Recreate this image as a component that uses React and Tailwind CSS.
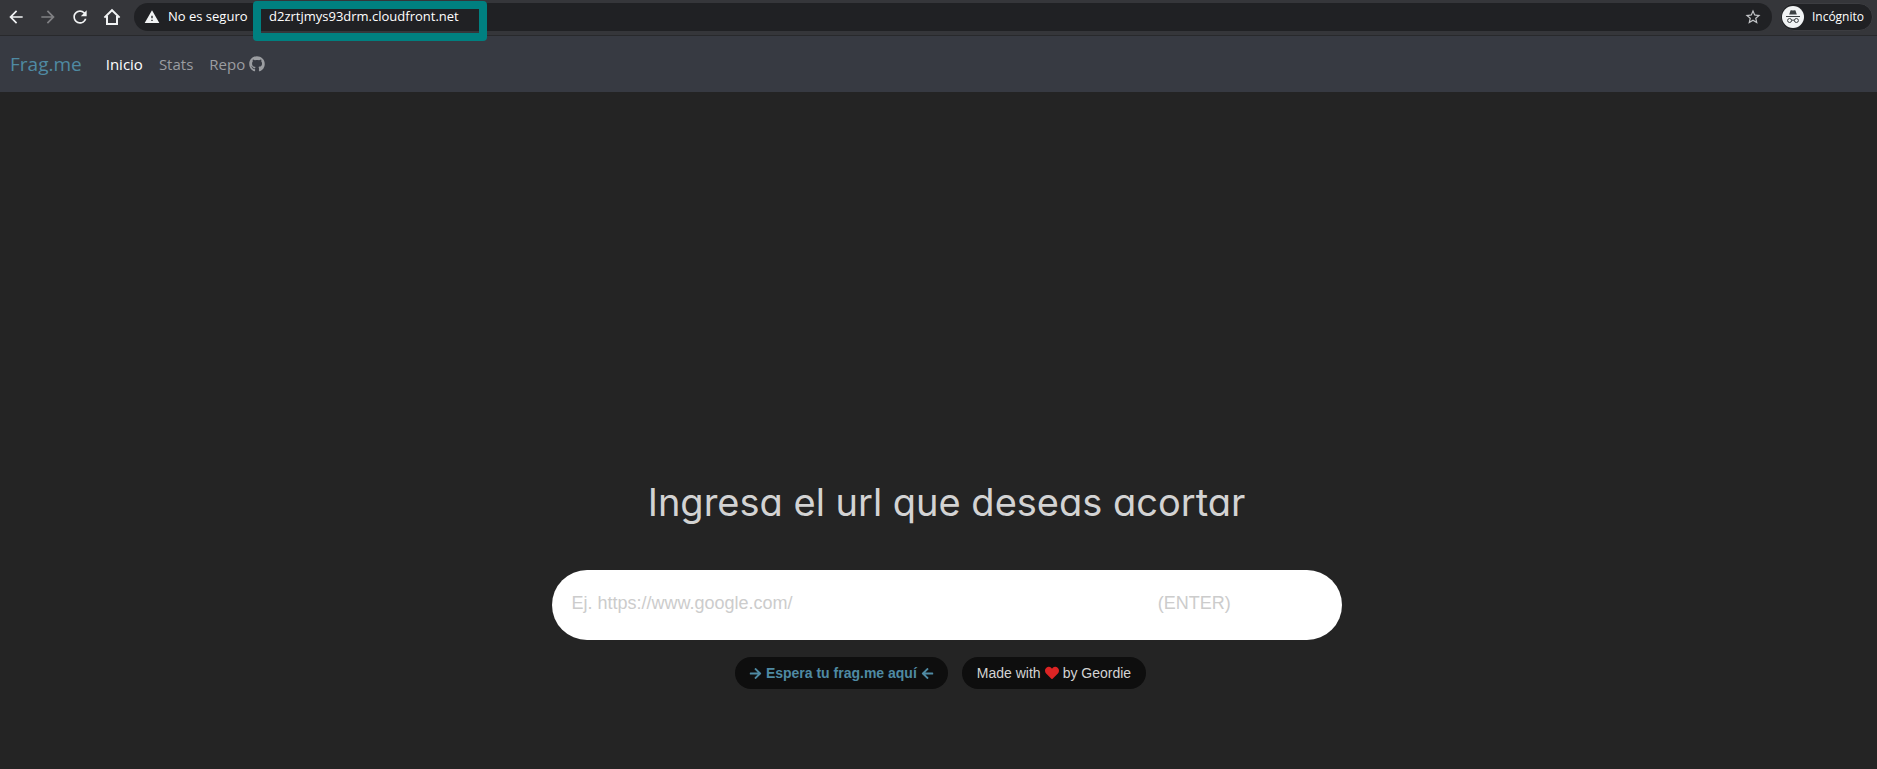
import React from "react";
import { MdArrowBack, MdArrowForward, MdRefresh, MdWarning, MdStarBorder } from "react-icons/md";
import { FaGithub, FaArrowRight, FaArrowLeft, FaHeart } from "react-icons/fa";

const placeholder = "Ej. https://www.google.com/" + "\u00a0".repeat(73) + "(ENTER)";

function ToolButton({ label, children }) {
  return (
    <button type="button" aria-label={label} className="flex size-8 items-center justify-center">
      {children}
    </button>
  );
}

function House() {
  return (
    <svg viewBox="0 0 18 18" className="size-[18px]" fill="none" stroke="currentColor" strokeWidth="2" aria-hidden="true">
      <path d="M1.4 9.6 9 2.2l7.6 7.4M4 8v8h10V8" />
    </svg>
  );
}

function Incognito() {
  return (
    <svg viewBox="0 0 22 22" className="size-[22px]" aria-hidden="true">
      <circle cx="11" cy="11" r="11" fill="#f1f3f4" />
      <path d="M7.2 8.6 8.5 4.6q.2-.6.8-.4l1.7.4 1.7-.4q.6-.2.8.4l1.3 4z" fill="#3c4043" />
      <path d="M4 10.5h14" stroke="#3c4043" strokeWidth="1" />
      <circle cx="7.6" cy="14.5" r="2" fill="none" stroke="#3c4043" strokeWidth="1" />
      <circle cx="14.4" cy="14.5" r="2" fill="none" stroke="#3c4043" strokeWidth="1" />
      <path d="M9.6 14.4q1.4-.7 2.8 0" fill="none" stroke="#3c4043" strokeWidth="1" />
    </svg>
  );
}

function BrowserBar() {
  return (
    <header className="flex h-9 items-center border-b border-[#28292c] bg-[#35363a] pr-1 pb-1 pt-[3px] font-['Open_Sans','Noto_Sans',sans-serif] text-white">
      <div className="flex text-[#f1f3f4]">
        <ToolButton label="Atrás"><MdArrowBack className="size-5" /></ToolButton>
        <ToolButton label="Adelante"><MdArrowForward className="size-5 text-[#808184]" /></ToolButton>
        <ToolButton label="Recargar"><MdRefresh className="size-5" /></ToolButton>
        <ToolButton label="Inicio"><House /></ToolButton>
      </div>
      <div className="ml-1.5 flex h-7 flex-1 items-center rounded-full bg-[#202124] px-2.5 text-[13px]">
        <MdWarning className="mr-2 size-4 text-[#f1f3f4]" />
        <span className="w-[85px] whitespace-nowrap">No es seguro</span>
        <div className="relative flex-1">
          <input
            aria-label="Dirección"
            defaultValue="d2zrtjmys93drm.cloudfront.net"
            className="block w-full bg-transparent pl-4 outline-none"
          />
          <div className="pointer-events-none absolute -top-1.5 left-0 h-10 w-[234px] rounded border-8 border-[#008080]" />
        </div>
        <button type="button" aria-label="Favoritos"><MdStarBorder className="size-[18px] text-[#c4c6c9]" /></button>
      </div>
      <button type="button" className="ml-2 flex h-7 items-center gap-2 rounded-full border border-[#3c3d41] bg-[#202124] pl-px pr-2 text-xs">
        <Incognito />
        Incógnito
      </button>
    </header>
  );
}

function NavBar() {
  return (
    <nav className="flex h-14 items-center bg-[#373a42] px-2.5 font-['Open_Sans','Noto_Sans',sans-serif] text-[15px] text-[#9b9da1]">
      <a href="#" className="mr-6 text-[19px] text-[#4f8aa3]">Frag.me</a>
      <div className="flex gap-4">
        <a href="#inicio" className="text-white">Inicio</a>
        <a href="#stats">Stats</a>
        <a href="#repo" className="flex items-center gap-1">Repo <FaGithub className="size-4" /></a>
      </div>
    </nav>
  );
}

export default function App() {
  return (
    <div className="flex min-h-screen flex-col bg-[#242424]">
      <BrowserBar />
      <NavBar />
      <main className="flex flex-1 flex-col items-center justify-end pb-20 pl-4 font-['Liberation_Sans',Arial,sans-serif]">
        <h1 className="mb-11 font-['Inter',sans-serif] text-[38px] leading-12 text-[#d3d3d3] [font-feature-settings:'cv11']">
          <label htmlFor="url">Ingresa el url que deseas acortar</label>
        </h1>
        <input
          id="url"
          placeholder={placeholder}
          className="h-[70px] w-full max-w-[790px] rounded-full bg-white px-5 pb-1 text-lg text-[#242424] outline-none placeholder:text-[#cccccc]"
        />
        <div className="mt-[17px] mr-3 flex gap-3.5 text-sm">
          <span className="flex h-8 items-center gap-1 rounded-full bg-[#0e0e0e] px-3.5 font-bold text-[#4f8aa3]">
            <FaArrowRight className="size-[13px]" /> Espera tu frag.me aquí <FaArrowLeft className="size-[13px]" />
          </span>
          <span className="flex h-8 items-center gap-1 rounded-full bg-[#0e0e0e] px-[15px] text-[#d3d3d3]">
            Made with <FaHeart className="size-3.5 text-[#dc2424]" /> by Geordie
          </span>
        </div>
      </main>
    </div>
  );
}
